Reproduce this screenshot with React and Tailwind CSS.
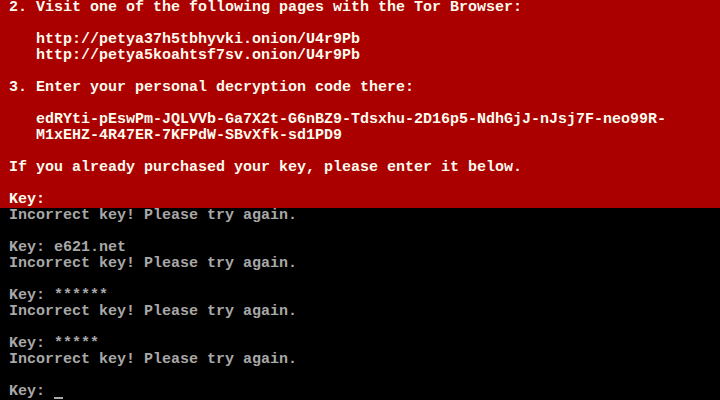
import React from "react";

const redLines = [
  " 2. Visit one of the following pages with the Tor Browser:",
  "",
  "    http://petya37h5tbhyvki.onion/U4r9Pb",
  "    http://petya5koahtsf7sv.onion/U4r9Pb",
  "",
  " 3. Enter your personal decryption code there:",
  "",
  "    edRYti-pEswPm-JQLVVb-Ga7X2t-G6nBZ9-Tdsxhu-2D16p5-NdhGjJ-nJsj7F-neo99R-",
  "    M1xEHZ-4R47ER-7KFPdW-SBvXfk-sd1PD9",
  "",
  " If you already purchased your key, please enter it below.",
  "",
  " Key:",
];

const blackLines = [
  " Incorrect key! Please try again.",
  "",
  " Key: e621.net",
  " Incorrect key! Please try again.",
  "",
  " Key: ******",
  " Incorrect key! Please try again.",
  "",
  " Key: *****",
  " Incorrect key! Please try again.",
  "",
];

const Line = ({ text }) => (
  <div className="h-4 leading-4 whitespace-pre">{text}</div>
);

export default function App() {
  return (
    <div className="w-[720px] h-[400px] overflow-hidden bg-black font-['Liberation_Mono',monospace] text-[15px] font-bold">
      <div className="h-[208px] bg-[#aa0000] text-[#fdfbee]">
        {redLines.map((t, i) => (
          <Line key={i} text={t} />
        ))}
      </div>
      <div className="text-[#a8a8a8]">
        {blackLines.map((t, i) => (
          <Line key={i} text={t} />
        ))}
        <div className="h-4 leading-4 whitespace-pre flex">
          <span>{" Key: "}</span>
          <span className="w-[9px] h-4 flex items-end">
            <span className="w-[9px] h-[2px] bg-[#a8a8a8] mb-px" />
          </span>
        </div>
      </div>
    </div>
  );
}
